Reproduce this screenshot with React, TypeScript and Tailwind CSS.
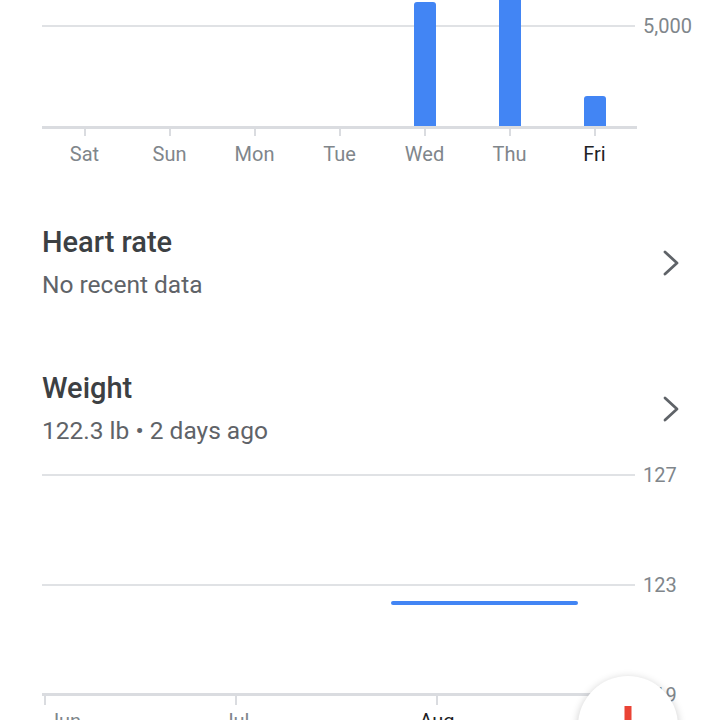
const days = ['Sat', 'Sun', 'Mon', 'Tue', 'Wed', 'Thu', 'Fri']
// bar heights in px for the visible part of the steps chart
const steps = [0, 0, 0, 0, 124, 150, 30]

const months = [
  { label: 'Jun', x: 2, current: false },
  { label: 'Jul', x: 193, current: false },
  { label: 'Aug', x: 394, current: true },
]

function Chevron() {
  return (
    <svg width="18" height="28" viewBox="0 0 18 28" fill="none" className="shrink-0">
      <polyline points="3,3 15,14 3,25" stroke="#5f6368" strokeWidth="2.8" strokeLinecap="round" strokeLinejoin="round" />
    </svg>
  )
}

function MetricRow({ title, subtitle }: { title: string; subtitle: string }) {
  return (
    <div className="flex items-center pl-[42px] pr-[40px]">
      <div className="flex-1">
        <div className="text-[29px] leading-[34px] font-medium text-[#3c4043]">{title}</div>
        <div className="mt-[11px] text-[24.5px] leading-[30px] text-[#5f6368]">{subtitle}</div>
      </div>
      <Chevron />
    </div>
  )
}

function GridRow({ label }: { label: string }) {
  return (
    <div className="flex h-[24px] items-center">
      <div className="ml-[42px] w-[593px] h-[2px] bg-[#e0e2e5]" />
      <div className="ml-[8px] text-[20px] leading-[24px] text-[#80868b]">{label}</div>
    </div>
  )
}

function AddButton() {
  return (
    <div className="fixed left-[578px] top-[676px] flex h-[100px] w-[100px] items-center justify-center rounded-full bg-white shadow-[0_2px_8px_rgba(0,0,0,0.22)]">
      <svg width="44" height="44" viewBox="0 0 44 44">
        <rect x="18.5" y="2" width="7" height="17" fill="#ea4335" />
        <rect x="25" y="18.5" width="17" height="7" fill="#34a853" />
        <rect x="18.5" y="25" width="7" height="17" fill="#fbbc04" />
        <rect x="2" y="18.5" width="17" height="7" fill="#4285f4" />
      </svg>
    </div>
  )
}

export default function App() {
  return (
    <div className="relative h-[720px] w-[720px] overflow-hidden bg-white font-['Roboto',sans-serif]">
      {/* Steps chart */}
      <div className="flex">
        <div className="ml-[42px] w-[595px]">
          <div className="relative h-[129px] border-b-[3px] border-[#dadce0]">
            <div className="absolute left-0 top-[25px] h-[2px] w-[593px] bg-[#e0e2e5]" />
            <div className="relative grid h-full grid-cols-7 grid-rows-1">
              {steps.map((h, i) => (
                <div key={i} className="flex items-end justify-center">
                  {h > 0 && <div className="w-[22px] shrink-0 rounded-t-[3px] bg-[#4285f4]" style={{ height: h }} />}
                </div>
              ))}
            </div>
          </div>
          <div className="grid h-[7px] grid-cols-7">
            {days.map((d) => (
              <div key={d} className="flex justify-center">
                <div className="h-full w-[2px] bg-[#dadce0]" />
              </div>
            ))}
          </div>
          <div className="mt-[6px] grid grid-cols-7">
            {days.map((d) => (
              <div
                key={d}
                className={`text-center text-[20px] leading-[24px] ${d === 'Fri' ? 'text-[#202124]' : 'text-[#80868b]'}`}
              >
                {d}
              </div>
            ))}
          </div>
        </div>
        <div className="ml-[6px] pt-[14px] text-[20px] leading-[24px] text-[#80868b]">5,000</div>
      </div>

      <div className="mt-[59px]">
        <MetricRow title="Heart rate" subtitle="No recent data" />
      </div>
      <div className="mt-[71px]">
        <MetricRow title="Weight" subtitle="122.3 lb • 2 days ago" />
      </div>

      {/* Weight chart */}
      <div className="mt-[17px]">
        <GridRow label="127" />
        <div className="h-[86px]" />
        <GridRow label="123" />
        <div className="ml-[391px] mt-[4px] h-[4px] w-[187px] rounded-full bg-[#4285f4]" />
        <div className="mt-[78px] flex items-start">
          <div className="ml-[42px] w-[593px]">
            <div className="mt-[10px] h-[3px] bg-[#dadce0]" />
            <div className="relative h-[9px]">
              {months.map((m) => (
                <div key={m.label} className="absolute top-0 h-full w-[2px] bg-[#dadce0]" style={{ left: m.x }} />
              ))}
            </div>
            <div className="relative mt-[4px] h-[24px]">
              {months.map((m, i) => (
                <div
                  key={m.label}
                  className={`absolute top-0 text-[20px] leading-[24px] ${m.current ? 'text-[#202124]' : 'text-[#80868b]'} ${i === 0 ? '' : '-translate-x-1/2'}`}
                  style={{ left: i === 0 ? 6 : m.x + 1 }}
                >
                  {m.label}
                </div>
              ))}
            </div>
          </div>
          <div className="ml-[8px] text-[20px] leading-[24px] text-[#80868b]">119</div>
        </div>
      </div>

      <AddButton />
    </div>
  )
}
